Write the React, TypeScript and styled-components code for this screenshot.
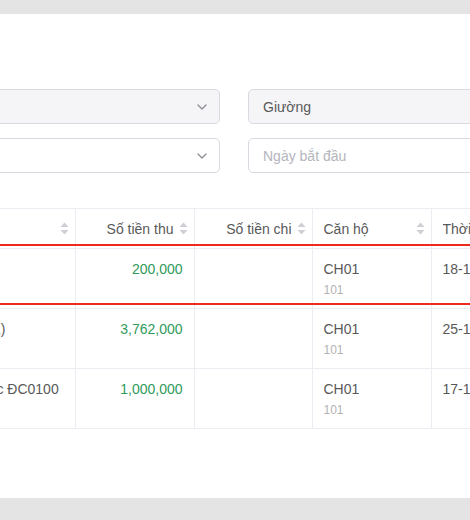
import React from "react";
import styled, { createGlobalStyle } from "styled-components";

// =============================================================================
// Constants
// =============================================================================

const TEXT = "#595959";
const MUTED = "#b3b3b3";
const PLACEHOLDER = "#b5b5bd";
const GREEN = "#2f9a5a";
const LINE = "#ececf2";
const INPUT_BORDER = "#d9d9e2";

// =============================================================================
// Styled Components
// =============================================================================

const GlobalStyle = createGlobalStyle`
  html, body {
    margin: 0;
    overflow: hidden;
    background: #e4e4e4;
    font-family: "Liberation Sans", Arial, sans-serif;
  }
`;

const Page = styled.div`
  padding-top: 14px;
  height: 520px;
  box-sizing: border-box;
`;

const Panel = styled.section`
  margin-left: -170px;
  width: 1000px;
  height: 484px;
  box-sizing: border-box;
  padding: 75px 20px 0;
  background: #fff;
`;

const Form = styled.div`
  display: grid;
  grid-template-columns: 370px 370px;
  column-gap: 28px;
  row-gap: 14px;
`;

const Field = styled.div<{ $disabled?: boolean }>`
  display: flex;
  align-items: center;
  justify-content: space-between;
  height: 35px;
  box-sizing: border-box;
  padding: 0 12px 0 14px;
  border: 1px solid ${INPUT_BORDER};
  border-radius: 5px;
  background: ${(p) => (p.$disabled ? "#f5f5f7" : "#fff")};
  font-size: 14px;
  color: ${TEXT};
`;

const Placeholder = styled.span`
  color: ${PLACEHOLDER};
`;

const TableWrap = styled.div`
  position: relative;
  margin-top: 35px;
`;

const Table = styled.table`
  border-collapse: collapse;
  table-layout: fixed;
  border-top: 1px solid ${LINE};
  font-size: 14px;
  color: ${TEXT};
`;

const Th = styled.th`
  height: 39px;
  padding: 0 6px 0 11px;
  border-left: 1px solid ${LINE};
  border-bottom: 1px solid ${LINE};
  font-weight: 400;
  text-align: left;
  &:first-child {
    border-left: none;
  }
`;

const HeadInner = styled.div<{ $right?: boolean }>`
  display: flex;
  align-items: center;
  justify-content: ${(p) => (p.$right ? "flex-end" : "space-between")};
  gap: 5px;
  white-space: nowrap;
  overflow: hidden;
`;

const Td = styled.td<{ $right?: boolean }>`
  vertical-align: top;
  padding: 10px 11px 9px;
  border-left: 1px solid ${LINE};
  border-bottom: 1px solid ${LINE};
  text-align: ${(p) => (p.$right ? "right" : "left")};
  line-height: 20px;
  white-space: nowrap;
  &:first-child {
    border-left: none;
  }
`;

const Money = styled.span`
  color: ${GREEN};
`;

const Sub = styled.div`
  margin-top: 2px;
  font-size: 12px;
  line-height: 18px;
  color: ${MUTED};
`;

const Highlight = styled.div`
  position: absolute;
  top: 36px;
  left: 0;
  right: 0;
  height: 61px;
  box-sizing: border-box;
  border: 2px solid #ee2a1e;
  pointer-events: none;
`;

// =============================================================================
// Icons
// =============================================================================

const Chevron = () => (
  <svg width="10" height="6" viewBox="0 0 10 6" fill="none">
    <polyline points="1,1 5,5 9,1" stroke="#8c8c94" strokeWidth="1.3" strokeLinecap="round" strokeLinejoin="round" />
  </svg>
);

const SortIcon = () => (
  <svg width="9" height="13" viewBox="0 0 9 13" style={{ flexShrink: 0 }}>
    <polygon points="4.5,0.5 8.5,5 0.5,5" fill="#cfcfd6" />
    <polygon points="0.5,8 8.5,8 4.5,12.5" fill="#cfcfd6" />
  </svg>
);

// =============================================================================
// Data
// =============================================================================

interface Row {
  title: string;
  income: string;
  expense: string;
  unit: string;
  room: string;
  date: string;
}

const ROWS: Row[] = [
  { title: "Tiền điện", income: "200,000", expense: "", unit: "CH01", room: "101", date: "18-11-2023" },
  { title: "Thu tiền nhà (tháng 11)", income: "3,762,000", expense: "", unit: "CH01", room: "101", date: "25-11-2023" },
  { title: "Thu tiền phòng đặt cọc ĐC0100", income: "1,000,000", expense: "", unit: "CH01", room: "101", date: "17-11-2023" },
];

const COLUMNS = [
  { label: "Nội dung", width: 225, right: false },
  { label: "Số tiền thu", width: 119, right: true },
  { label: "Số tiền chi", width: 118, right: true },
  { label: "Căn hộ", width: 119, right: false },
  { label: "Thời gian", width: 160, right: false },
  { label: "Ghi chú", width: 160, right: false },
];

// =============================================================================
// Main Component
// =============================================================================

const App = () => {
  return (
    <>
      <GlobalStyle />
      <Page>
        <Panel>
          <Form>
            <Field $disabled>
              <span>Phòng</span>
              <Chevron />
            </Field>
            <Field $disabled>
              <span>Giường</span>
            </Field>
            <Field>
              <Placeholder>Loại</Placeholder>
              <Chevron />
            </Field>
            <Field>
              <Placeholder>Ngày bắt đầu</Placeholder>
            </Field>
          </Form>

          <TableWrap>
            <Table>
              <colgroup>
                {COLUMNS.map((c) => (
                  <col key={c.label} style={{ width: c.width }} />
                ))}
              </colgroup>
              <thead>
                <tr>
                  {COLUMNS.map((c) => (
                    <Th key={c.label}>
                      <HeadInner $right={c.right}>
                        <span>{c.label}</span>
                        <SortIcon />
                      </HeadInner>
                    </Th>
                  ))}
                </tr>
              </thead>
              <tbody>
                {ROWS.map((r) => (
                  <tr key={r.income}>
                    <Td>{r.title}</Td>
                    <Td $right>
                      <Money>{r.income}</Money>
                    </Td>
                    <Td $right>{r.expense}</Td>
                    <Td>
                      {r.unit}
                      <Sub>{r.room}</Sub>
                    </Td>
                    <Td>{r.date}</Td>
                    <Td />
                  </tr>
                ))}
              </tbody>
            </Table>
            <Highlight />
          </TableWrap>
        </Panel>
      </Page>
    </>
  );
};

export default App;
